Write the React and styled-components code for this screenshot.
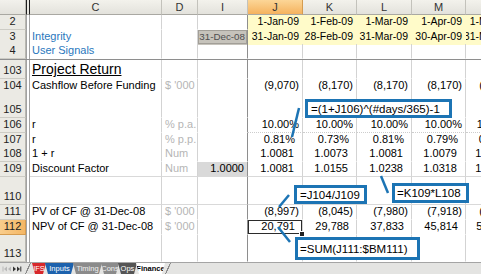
import React from "react";
import styled, { createGlobalStyle } from "styled-components";

const GlobalStyle = createGlobalStyle`
  html, body { margin: 0; padding: 0; background: #fff; overflow: hidden; }
  body { font-family: "Liberation Sans", Arial, sans-serif; }
`;

const COLS = "26px 4px 132px 36px 50px 55px 54px 55px 54px 52px";
const BLUE = "#1c74b4";
const BAND = "#fffbc9";

const Sheet = styled.div`
  position: relative;
  width: 481px;
  height: 274px;
  overflow: hidden;
  display: flex;
  flex-direction: column;
  font-size: 11px;
  color: #000;
`;

const Row = styled.div`
  display: grid;
  grid-template-columns: ${COLS};
  width: 518px;
  height: ${(p) => p.$h}px;
  flex: none;
`;

const Corner = styled.div`
  background: linear-gradient(#f2f1ec, #e3e2dc);
  border-right: 1px solid #b9b8b1;
  border-bottom: 1px solid #a9a8a2;
  box-sizing: border-box;
`;

const ColHead = styled.div`
  display: flex;
  align-items: center;
  justify-content: center;
  box-sizing: border-box;
  background: ${(p) =>
    p.$sel ? "linear-gradient(#fcd697, #f5b25e)" : "linear-gradient(#f3f2ec, #e3e2dc)"};
  border-right: 1px solid ${(p) => (p.$sel ? "#d59c50" : "#c3c2bb")};
  border-bottom: 1px solid #a9a8a2;
  font-size: 11px;
  color: #333;
  overflow: hidden;
`;

const HiddenMark = styled.div`
  box-sizing: border-box;
  border-left: 1px solid ${(p) => (p.$head ? "#1e1e1e" : "#a2a2a2")};
  border-right: 1px solid ${(p) => (p.$head ? "#1e1e1e" : "#a2a2a2")};
  background: ${(p) => (p.$head ? "#e8e7e1" : "#fff")};
  border-bottom: ${(p) => (p.$head ? "1px solid #a9a8a2" : "none")};
`;

const RowHead = styled.div`
  display: flex;
  align-items: flex-end;
  justify-content: center;
  box-sizing: border-box;
  padding-bottom: 1px;
  line-height: 13px;
  font-size: 11px;
  color: #222;
  background: ${(p) => (p.$sel ? "linear-gradient(90deg, #f9cd8c, #f4b765)" : "#ebeae4")};
  border-right: 1px solid ${(p) => (p.$sel ? "#d59c50" : "#b9b8b1")};
  border-bottom: 1px solid ${(p) => (p.$sel ? "#d59c50" : "#cdccc5")};
`;

const BaseCell = styled.div`
  display: flex;
  align-items: flex-end;
  box-sizing: border-box;
  min-width: 0;
  white-space: nowrap;
  overflow: hidden;
  line-height: 13px;
  padding-bottom: 1px;
  border-right: 1px solid #d3d3d3;
  border-bottom: 1px solid ${(p) => (p.$rule ? "#d9d9d9" : "transparent")};
`;

const LabelCell = styled(BaseCell)`
  padding-left: 2px;
  color: ${(p) => p.$color || "#000"};
  font-size: ${(p) => (p.$title ? 14 : 11)}px;
  line-height: ${(p) => (p.$title ? 16 : 13)}px;
  text-decoration: ${(p) => (p.$title ? "underline" : "none")};
`;

const UnitCell = styled(BaseCell)`
  padding-left: 3px;
  color: #b5b5b5;
`;

const FrozenCell = styled(BaseCell)`
  justify-content: flex-end;
  padding-right: ${(p) => (p.$tag ? 2 : 3)}px;
  border-right-color: #8e8e8e;
  background: ${(p) => p.$bg || "transparent"};
  color: ${(p) => p.$fg || "#000"};
  box-shadow: ${(p) => (p.$tag ? "inset 0 0 0 1px #a29f98" : "none")};
  font-size: ${(p) => (p.$tag ? 9.8 : 11)}px;
`;

const ValueCell = styled(BaseCell)`
  position: relative;
  justify-content: flex-end;
  padding-right: ${(p) => p.$pad}px;
  font-size: ${(p) => (p.$band ? 10.5 : 11)}px;
  background: ${(p) => (p.$band ? BAND : "transparent")};
  border-right-color: ${(p) => (p.$band ? BAND : "#d3d3d3")};
  border-bottom: 1px
    ${(p) => (p.$dotted ? "dotted #cdcdcd" : p.$rule ? "solid #d9d9d9" : "solid transparent")};
  overflow: ${(p) => (p.$active ? "visible" : "hidden")};
  box-shadow: ${(p) => (p.$active ? "inset 0 0 0 1px #2b2b2b" : "none")};
`;

const FillHandle = styled.span`
  position: absolute;
  right: -3px;
  bottom: -3px;
  width: 4px;
  height: 4px;
  background: #222;
  border: 1px solid #fff;
  z-index: 2;
`;

const FreezeLine = styled.div`
  height: 1px;
  flex: none;
  background: #8e8e8e;
  width: 100%;
`;

const Callout = styled.div`
  position: absolute;
  left: ${(p) => p.$x}px;
  top: ${(p) => p.$y}px;
  width: ${(p) => p.$w}px;
  height: ${(p) => p.$h}px;
  box-sizing: border-box;
  border: 3px solid ${BLUE};
  background: #fff;
  display: flex;
  align-items: center;
  padding-left: ${(p) => p.$pl}px;
  font-size: 11.5px;
  color: #000;
  white-space: nowrap;
  z-index: 3;
`;

const Leaders = styled.svg`
  position: absolute;
  left: 0;
  top: 0;
  width: 481px;
  height: 274px;
  pointer-events: none;
  z-index: 3;
`;

const TabBar = styled.div`
  height: 12px;
  flex: none;
  display: flex;
  align-items: stretch;
  box-sizing: border-box;
  background: #e4e4e2;
  border-top: 1px solid #a4a4a4;
`;

const Nav = styled.div`
  width: 22px;
  display: flex;
  align-items: center;
  padding-left: 2px;
`;

const Slant = styled.div`
  width: 8px;
  background: linear-gradient(115deg, transparent 45%, #8a8a8a 46%, #8a8a8a 54%, transparent 55%);
`;

const Tab = styled.div`
  width: ${(p) => p.$w}px;
  display: flex;
  align-items: center;
  justify-content: center;
  font-size: 7.5px;
  line-height: 10px;
  background: ${(p) => p.$bg};
  color: ${(p) => p.$fg};
  font-weight: ${(p) => (p.$active ? 700 : 400)};
  clip-path: polygon(0 0, 100% 0, calc(100% - 3px) 100%, 3px 100%);
  margin-right: -1px;
  white-space: nowrap;
  overflow: hidden;
`;

const DATES1 = ["1-Jan-09", "1-Feb-09", "1-Mar-09", "1-Apr-09", "1-May-09"];
const DATES2 = ["31-Jan-09", "28-Feb-09", "31-Mar-09", "30-Apr-09", "31-May-09"];

const ROWS = [
  { n: 2, h: 15, vals: DATES1, band: true, pad: 3 },
  { n: 3, h: 14, label: "Integrity", color: "#2a77bd", frozen: { text: "31-Dec-08", tag: true }, vals: DATES2, band: true, pad: 3 },
  { n: 4, h: 15, label: "User Signals", color: "#2a77bd" },
  "freeze",
  { n: 103, h: 19, label: "Project Return", title: true },
  { n: 104, h: 14, label: "Cashflow Before Funding", unit: "$ '000", vals: ["(9,070)", "(8,170)", "(8,170)", "(8,170)", "(8,170)"], pad: 3 },
  { n: 105, h: 25 },
  { n: 106, h: 15, label: "r", unit: "% p.a.", vals: ["10.00%", "10.00%", "10.00%", "10.00%", "10.00%"], pad: 3, dotted: true },
  { n: 107, h: 14, label: "r", unit: "% p.p.", vals: ["0.81%", "0.73%", "0.81%", "0.79%", "0.81%"], pad: 7 },
  { n: 108, h: 15, label: "1 + r", unit: "Num", vals: ["1.0081", "1.0073", "1.0081", "1.0079", "1.0081"], pad: 8 },
  { n: 109, h: 15, label: "Discount Factor", unit: "Num", frozen: { text: "1.0000", shade: true }, vals: ["1.0081", "1.0155", "1.0238", "1.0318", "1.0400"], pad: 8, rule: true },
  { n: 110, h: 28, rule: true },
  { n: 111, h: 15, label: "PV of CF @ 31-Dec-08", unit: "$ '000", vals: ["(8,997)", "(8,045)", "(7,980)", "(7,918)", "(7,851)"], pad: 3 },
  { n: 112, h: 15, label: "NPV of CF @ 31-Dec-08", unit: "$ '000", vals: ["20,791", "29,788", "37,833", "45,814", "53,665"], pad: 7, sel: true },
  { n: 113, h: 27 },
];

const HEADS = ["C", "D", "I", "J", "K", "L", "M", "N"];

function HeaderRow() {
  return (
    <Row $h={15}>
      <Corner />
      <HiddenMark $head />
      {HEADS.map((c) => (
        <ColHead key={c} $sel={c === "J"}>
          {c}
        </ColHead>
      ))}
    </Row>
  );
}

function SheetRow({ r }) {
  const vals = r.vals || ["", "", "", "", ""];
  const fr = r.frozen;
  return (
    <Row $h={r.h}>
      <RowHead $sel={r.sel}>{r.n}</RowHead>
      <HiddenMark />
      <LabelCell $color={r.color} $title={r.title} $rule={r.rule}>
        {r.label}
      </LabelCell>
      <UnitCell $rule={r.rule}>{r.unit}</UnitCell>
      <FrozenCell
        $rule={r.rule}
        $tag={fr && fr.tag}
        $bg={fr ? (fr.tag ? "#c6c3bb" : "#d9d9d9") : undefined}
        $fg={fr && fr.tag ? "#4e4e4e" : "#000"}
      >
        {fr ? fr.text : ""}
      </FrozenCell>
      {vals.map((v, i) => (
        <ValueCell
          key={i}
          $pad={r.pad || 3}
          $band={r.band}
          $dotted={r.dotted}
          $rule={r.rule}
          $active={r.sel && i === 0}
        >
          {v}
          {r.sel && i === 0 ? <FillHandle /> : null}
        </ValueCell>
      ))}
    </Row>
  );
}

function NavArrows() {
  return (
    <svg width="20" height="8" viewBox="0 0 20 8">
      <rect x="0.5" y="1.5" width="1" height="5" fill="#b9b9b9" />
      <path d="M5 1.5 L2 4 L5 6.5 Z" fill="#b9b9b9" />
      <path d="M9 1.5 L6 4 L9 6.5 Z" fill="#b9b9b9" />
      <path d="M11 1.5 L14 4 L11 6.5 Z" fill="#333" />
      <path d="M15 1.5 L18 4 L15 6.5 Z" fill="#333" />
      <rect x="18.3" y="1.5" width="1" height="5" fill="#333" />
    </svg>
  );
}

const TABS = [
  { t: "IFS", w: 14, bg: "#d7282b", fg: "#fff" },
  { t: "Inputs", w: 29, bg: "#1d62ad", fg: "#fff" },
  { t: "Timing", w: 29, bg: "#8b8b8b", fg: "#f2f2f2" },
  { t: "Cons", w: 18, bg: "#8b8b8b", fg: "#f2f2f2" },
  { t: "Ops", w: 19, bg: "#555", fg: "#fff" },
  { t: "Finance", w: 29, bg: "#fff", fg: "#000", active: true },
];

export default function App() {
  return (
    <>
      <GlobalStyle />
      <Sheet>
        <HeaderRow />
        {ROWS.map((r, i) =>
          r === "freeze" ? <FreezeLine key={"f" + i} /> : <SheetRow key={r.n} r={r} />
        )}
        <TabBar>
          <Nav>
            <NavArrows />
          </Nav>
          <Slant />
          {TABS.map((t) => (
            <Tab key={t.t} $w={t.w} $bg={t.bg} $fg={t.fg} $active={t.active}>
              {t.t}
            </Tab>
          ))}
          <Slant />
        </TabBar>

        <Callout $x={305} $y={99} $w={147} $h={19} $pl={3}>
          =(1+J106)^(#days/365)-1
        </Callout>
        <Callout $x={294} $y={185} $w={73} $h={19} $pl={3}>
          =J104/J109
        </Callout>
        <Callout $x={392} $y={183} $w={77} $h={20} $pl={2}>
          =K109*L108
        </Callout>
        <Callout $x={295} $y={237} $w={125} $h={23} $pl={2}>
          =SUM(J111:$BM111)
        </Callout>
        <Leaders viewBox="0 0 481 274">
          <g stroke={BLUE} strokeWidth="2.5" strokeLinecap="butt">
            <line x1="299" y1="108" x2="292" y2="137" />
            <line x1="289" y1="195" x2="279" y2="207" />
            <line x1="278" y1="227" x2="290" y2="242" />
            <line x1="381" y1="176" x2="388" y2="193" />
          </g>
        </Leaders>
      </Sheet>
    </>
  );
}
